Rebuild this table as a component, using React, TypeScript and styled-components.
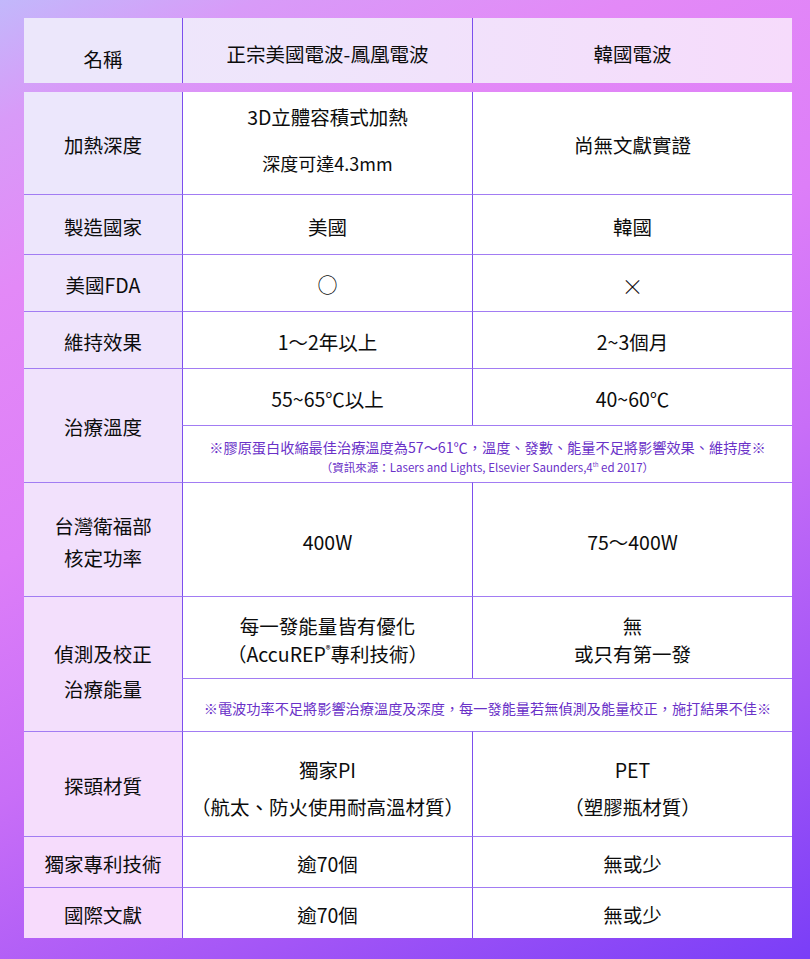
import React, { ReactElement, ReactNode } from 'react';
import styled, { createGlobalStyle } from 'styled-components';

const GlobalStyle = createGlobalStyle`
    html, body {
        margin: 0;
        padding: 0;
    }
    body {
        font-family: "Noto Sans CJK TC", "Noto Sans", sans-serif;
        color: #0c0c0c;
    }
`;

const COLS = '158px 290px 320px';
const ROWS = '102px 60px 57px 57px 57px 57px 114px 82px 53px 105px 51px 51px';
const ROW_LINE = '1px solid #a27cf3';
const COL_LINE = '1px solid #7c4eee';

const Page = styled.div`
    box-sizing: border-box;
    width: 810px;
    min-height: 959px;
    padding: 18px 18px 21px 24px;
    background: linear-gradient(
        155deg,
        #c2b8fb 0%,
        #d89bf8 9%,
        #e389f7 22%,
        #dd7ef8 42%,
        #c86ef7 60%,
        #a456f6 80%,
        #7a3ef7 100%
    );
`;

const Table = styled.div`
    display: flex;
    flex-direction: column;
    gap: 9px;
    width: 768px;
`;

const HeaderRow = styled.div`
    display: grid;
    grid-template-columns: ${COLS};
    height: 65px;
    background: linear-gradient(90deg, #ede7fb 0%, #efe5fb 35%, #f6dbfb 100%);
`;

const HeaderCell = styled.div<{ $first?: boolean }>`
    display: flex;
    align-items: center;
    justify-content: center;
    box-sizing: border-box;
    padding-top: ${({ $first }): number => ($first ? 16 : 6)}px;
    font-size: 19.5px;
    font-weight: 400;
    border-left: ${({ $first }): string => ($first ? 'none' : COL_LINE)};
    background: ${({ $first }): string => ($first ? '#ece7fb' : 'transparent')};
`;

const Body = styled.div`
    display: grid;
    grid-template-columns: ${COLS};
    grid-template-rows: ${ROWS};
    background: #ffffff;
`;

const Cell = styled.div<{ $top?: boolean; $gap?: number; $shift?: number }>`
    box-sizing: border-box;
    display: flex;
    flex-direction: column;
    align-items: center;
    justify-content: center;
    gap: ${({ $gap = 0 }): number => $gap}px;
    padding-top: ${({ $shift = 4 }): number => Math.max($shift, 0)}px;
    padding-bottom: ${({ $shift = 4 }): number => Math.max(-$shift, 0)}px;
    border-top: ${({ $top }): string => ($top ? 'none' : ROW_LINE)};
    font-size: 19.5px;
    font-weight: 400;
    line-height: 1.2;
    text-align: center;
    white-space: nowrap;
`;

const Label = styled(Cell)<{ $rows: number; $tint: string }>`
    grid-column: 1;
    grid-row: span ${({ $rows }): number => $rows};
    background: ${({ $tint }): string => $tint};
`;

const Data = styled(Cell)`
    border-left: ${COL_LINE};
`;

const Note = styled(Cell)`
    grid-column: 2 / span 2;
    border-left: ${COL_LINE};
    color: #6a31c8;
`;

const NoteMain = styled.span`
    font-size: 14.2px;
`;

const NoteSource = styled.span`
    font-size: 11.5px;
`;

const Small = styled.span`
    font-size: 18px;
`;

const Sup = styled.sup`
    font-size: 0.5em;
    line-height: 0;
    vertical-align: 0.9em;
`;

const Mark = styled.span<{ $thin?: boolean }>`
    font-weight: ${({ $thin }): number => ($thin ? 300 : 400)};
    font-size: ${({ $thin }): number => ($thin ? 22 : 20)}px;
`;

// label column drifts from lavender at the top to pink at the bottom
const tint = (t: number): string => {
    const a = [0xec, 0xe7, 0xfc];
    const b = [0xf7, 0xdb, 0xfc];
    const c = a.map((v, i) => Math.round(v + (b[i] - v) * t));
    return `rgb(${c.join(',')})`;
};

interface IRow {
    label: ReactNode;
    rows?: number;
    labelGap?: number;
    labelShift?: number;
    at: number;
    cells: ReactElement[];
}

const rows: IRow[] = [
    {
        label: '加熱深度',
        at: 0,
        cells: [
            <Data key="a" $top $gap={25} $shift={-6}>
                <span>3D立體容積式加熱</span>
                <Small>深度可達4.3mm</Small>
            </Data>,
            <Data key="b" $top>
                尚無文獻實證
            </Data>,
        ],
    },
    {
        label: '製造國家',
        at: 0.1,
        cells: [<Data key="a">美國</Data>, <Data key="b">韓國</Data>],
    },
    {
        label: '美國FDA',
        at: 0.2,
        cells: [
            <Data key="a">
                <Mark>○</Mark>
            </Data>,
            <Data key="b">
                <Mark $thin>×</Mark>
            </Data>,
        ],
    },
    {
        label: '維持效果',
        at: 0.27,
        cells: [<Data key="a">1～2年以上</Data>, <Data key="b">2~3個月</Data>],
    },
    {
        label: '治療溫度',
        rows: 2,
        labelShift: 2,
        at: 0.38,
        cells: [
            <Data key="a">55~65℃以上</Data>,
            <Data key="b">40~60℃</Data>,
            <Note key="n" $gap={5} $shift={6}>
                <NoteMain>※膠原蛋白收縮最佳治療溫度為57～61℃，溫度、發數、能量不足將影響效果、維持度※</NoteMain>
                <NoteSource>
                    （資訊來源：Lasers and Lights, Elsevier Saunders,4<Sup>th</Sup> ed 2017）
                </NoteSource>
            </Note>,
        ],
    },
    {
        label: (
            <>
                <span>台灣衛福部</span>
                <span>核定功率</span>
            </>
        ),
        labelGap: 9,
        at: 0.52,
        cells: [<Data key="a">400W</Data>, <Data key="b">75～400W</Data>],
    },
    {
        label: (
            <>
                <span>偵測及校正</span>
                <span>治療能量</span>
            </>
        ),
        rows: 2,
        labelGap: 11,
        labelShift: 14,
        at: 0.66,
        cells: [
            <Data key="a" $gap={4}>
                <span>每一發能量皆有優化</span>
                <span>
                    （AccuREP<Sup>®</Sup>專利技術）
                </span>
            </Data>,
            <Data key="b" $gap={4}>
                <span>無</span>
                <span>或只有第一發</span>
            </Data>,
            <Note key="n" $shift={8}>
                <NoteMain>※電波功率不足將影響治療溫度及深度，每一發能量若無偵測及能量校正，施打結果不佳※</NoteMain>
            </Note>,
        ],
    },
    {
        label: '探頭材質',
        at: 0.82,
        cells: [
            <Data key="a" $gap={14} $shift={8}>
                <span>獨家PI</span>
                <span>（航太、防火使用耐高溫材質）</span>
            </Data>,
            <Data key="b" $gap={14} $shift={8}>
                <span>PET</span>
                <span>（塑膠瓶材質）</span>
            </Data>,
        ],
    },
    {
        label: '獨家專利技術',
        at: 0.94,
        cells: [<Data key="a">逾70個</Data>, <Data key="b">無或少</Data>],
    },
    {
        label: '國際文獻',
        at: 1,
        cells: [<Data key="a">逾70個</Data>, <Data key="b">無或少</Data>],
    },
];

const App = (): ReactElement => (
    <>
        <GlobalStyle />
        <Page>
            <Table>
                <HeaderRow>
                    <HeaderCell $first>名稱</HeaderCell>
                    <HeaderCell>正宗美國電波-鳳凰電波</HeaderCell>
                    <HeaderCell>韓國電波</HeaderCell>
                </HeaderRow>
                <Body>
                    {rows.map((row, i) => (
                        <React.Fragment key={i}>
                            <Label
                                $rows={row.rows ?? 1}
                                $tint={tint(row.at)}
                                $top={i === 0}
                                $gap={row.labelGap}
                                $shift={row.labelShift}
                            >
                                {row.label}
                            </Label>
                            {row.cells}
                        </React.Fragment>
                    ))}
                </Body>
            </Table>
        </Page>
    </>
);

export default App;
